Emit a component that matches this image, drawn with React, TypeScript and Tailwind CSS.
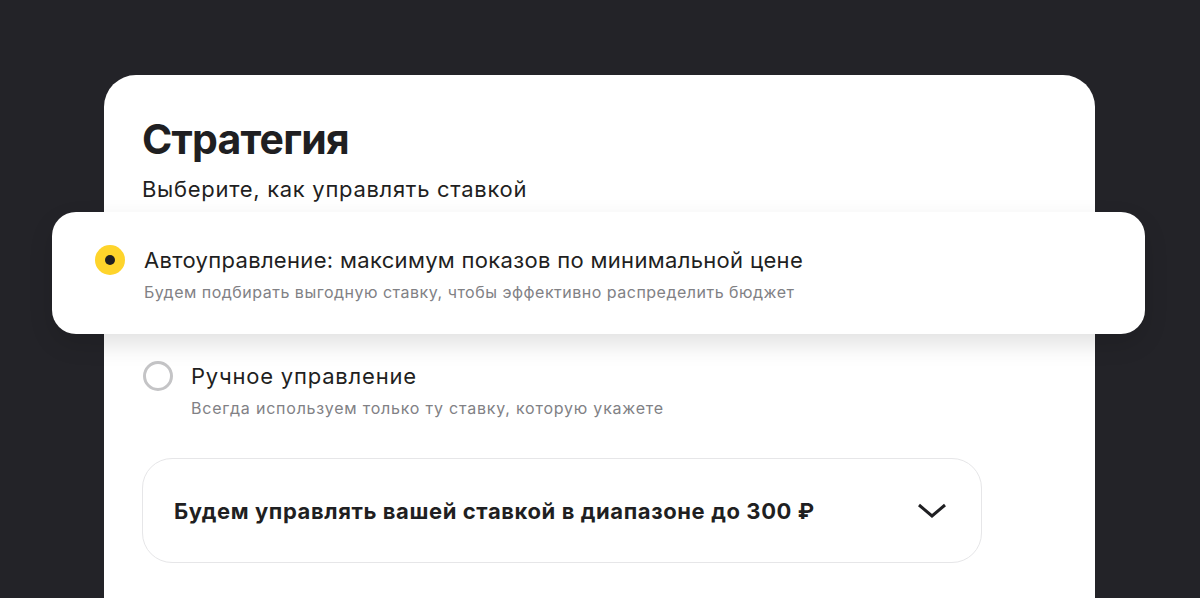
export default function App() {
  return (
    <div
      className="h-[598px] w-[1200px] overflow-hidden bg-[#232328] pl-[104px] pr-[105px] pt-[75px]"
      style={{ fontFamily: 'Inter, "Noto Sans", sans-serif' }}
    >
      <div className="flex h-[600px] flex-col rounded-t-[32px] bg-white pt-[38px]">
        <h1 className="pl-[38px] text-[41px] font-bold leading-[52px] tracking-[-0.8px] text-[#1f1f22]">
          Стратегия
        </h1>
        <p className="mt-[10px] pl-[38px] text-[22px] leading-[28px] tracking-[0.7px] text-[#1f1f22]">
          Выберите, как управлять ставкой
        </p>

        <div className="relative -ml-[52px] -mr-[50px] mt-[9px] flex h-[122px] items-start gap-[19px] rounded-[24px] bg-white pl-[43px] pt-[33px] shadow-[0_10px_24px_rgba(0,0,0,0.12)]">
          <div className="flex h-[30px] w-[30px] shrink-0 items-center justify-center rounded-full bg-[#fed42b]">
            <div className="h-[10px] w-[10px] rounded-full bg-[#1f1f22]" />
          </div>
          <div className="flex flex-col">
            <span className="text-[22px] leading-[30px] tracking-[0.32px] text-[#1f1f22]">
              Автоуправление: максимум показов по минимальной цене
            </span>
            <span className="mt-[6px] text-[16px] leading-[22px] tracking-[0.5px] text-[#818185]">
              Будем подбирать выгодную ставку, чтобы эффективно распределить бюджет
            </span>
          </div>
        </div>

        <div className="mt-[27px] flex items-start gap-[18px] pl-[39px]">
          <div className="h-[30px] w-[30px] shrink-0 rounded-full border-[3px] border-[#c4c4c6]" />
          <div className="flex flex-col">
            <span className="text-[22px] leading-[30px] tracking-[0.8px] text-[#1f1f22]">
              Ручное управление
            </span>
            <span className="mt-[6px] text-[16px] leading-[22px] tracking-[0.78px] text-[#818185]">
              Всегда используем только ту ставку, которую укажете
            </span>
          </div>
        </div>

        <div className="ml-[38px] mt-[39px] flex h-[105px] w-[840px] items-center justify-between rounded-[30px] border border-[#e6e6e8] pl-[31px] pr-[34px]">
          <span className="text-[22px] font-bold leading-[30px] tracking-[0.6px] text-[#1f1f22]">
            Будем управлять вашей ставкой в диапазоне до 300 ₽
          </span>
          <svg width="30" height="18" viewBox="0 0 30 18" fill="none">
            <path d="M2 3l13 11L28 3" stroke="#1f1f22" strokeWidth="3" />
          </svg>
        </div>
      </div>
    </div>
  );
}
